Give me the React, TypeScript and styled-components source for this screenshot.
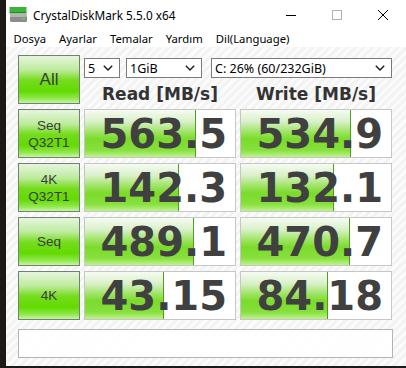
import React from 'react'
import styled, { createGlobalStyle } from 'styled-components'

const GlobalStyle = createGlobalStyle`
  html, body {
    margin: 0;
    padding: 0;
    background: #1d1916;
    overflow: hidden;
  }
  #root {
    width: 406px;
    height: 368px;
  }
`

const Window = styled.div`
  margin-left: 6px;
  width: 400px;
  height: 366px;
  background: #ffffff;
  display: flex;
  flex-direction: column;
  font-family: 'Noto Sans', 'Open Sans', sans-serif;
  color: #000;
`

const TitleBar = styled.div`
  height: 29px;
  display: flex;
  align-items: center;
  padding-left: 3px;
`

const TitleText = styled.span`
  font-size: 11.8px;
  margin-left: 5px;
  flex: 1;
  color: #000;
`

const WinButton = styled.div`
  width: 46px;
  height: 29px;
  display: flex;
  align-items: center;
  justify-content: center;
`

const MenuBar = styled.div`
  height: 18px;
  display: flex;
  align-items: center;
  padding-left: 1px;
`

const MenuItem = styled.span`
  font-size: 11.3px;
  padding: 0 6.5px;
  color: #000;
`

const Content = styled.div`
  flex: 1;
  background: repeating-linear-gradient(
    135deg,
    #f3f3f3 0px,
    #f3f3f3 3px,
    #fbfbfb 3px,
    #fbfbfb 6px
  );
  padding: 8px 13px 0 12px;
  display: flex;
  flex-direction: column;
`

const Grid = styled.div`
  display: grid;
  grid-template-columns: 62px 152px 152px;
  grid-auto-rows: 49px;
  column-gap: 4px;
  row-gap: 5px;
`

const LabelButton = styled.div<{ $big?: boolean }>`
  box-sizing: border-box;
  border: 1px solid #728272;
  background: linear-gradient(
    to bottom,
    #e6f5de 0%,
    #bdeb9c 30%,
    #74dc1c 52%,
    #62da00 75%,
    #8fe84a 90%,
    #c6f5a0 100%
  );
  display: flex;
  flex-direction: column;
  align-items: center;
  justify-content: center;
`

const LabelText = styled.span<{ $big?: boolean }>`
  font-family: 'Liberation Sans', Arial, sans-serif;
  font-size: ${p => (p.$big ? '17px' : '13.5px')};
  line-height: ${p => (p.$big ? '18px' : '17px')};
  color: #3c3c3c;
`

const TopControls = styled.div`
  grid-column: 2 / 4;
  display: flex;
  flex-direction: column;
`

const SelectRow = styled.div`
  display: flex;
  margin-top: 3px;
  height: 20px;
`

const Select = styled.div<{ $w: number; $ml: number }>`
  box-sizing: border-box;
  width: ${p => p.$w}px;
  margin-left: ${p => p.$ml}px;
  height: 20px;
  border: 1px solid #7a7a7a;
  background: #fff;
  display: flex;
  align-items: center;
  justify-content: space-between;
  padding: 0 6px 0 3px;
  font-size: 12.5px;
  color: #000;
`

const HeaderRow = styled.div`
  display: grid;
  grid-template-columns: 152px 152px;
  column-gap: 4px;
  flex: 1;
  align-items: center;
`

const Header = styled.div`
  text-align: center;
  font-family: 'DejaVu Sans', Verdana, sans-serif;
  font-weight: bold;
  font-size: 17px;
  color: #333;
  padding-top: 5px;
`

const ValueBox = styled.div`
  position: relative;
  box-sizing: border-box;
  border: 1px solid #c6c6c6;
  background: #fff;
  overflow: hidden;
`

const Fill = styled.div`
  position: absolute;
  left: 0;
  top: 0;
  bottom: 0;
  border-right: 1px solid #4f9f1f;
  background: linear-gradient(
    to bottom,
    #f6fbf3 0%,
    #d8f0c8 25%,
    #9be35e 48%,
    #7bdb2a 62%,
    #86e03c 85%,
    #bff28e 100%
  );
`

const ValueText = styled.div`
  position: relative;
  height: 100%;
  display: flex;
  align-items: center;
  justify-content: flex-end;
  padding-right: 8px;
  font-family: 'DejaVu Sans', Verdana, sans-serif;
  font-weight: bold;
  font-size: 40px;
  color: #404040;
`

const Comment = styled.div`
  margin-top: 9px;
  height: 29px;
  box-sizing: border-box;
  border: 1px solid #b4b4b4;
  background: rgba(255, 255, 255, 0.85);
`

const Chevron = () => (
  <svg width="10" height="6" viewBox="0 0 10 6">
    <path d="M0.8 0.8 L5 5 L9.2 0.8" fill="none" stroke="#1a1a1a" strokeWidth="1.4" />
  </svg>
)

const AppIcon = () => (
  <svg width="19" height="17" viewBox="0 0 19 17">
    <rect x="0.5" y="1" width="17" height="5" fill="#3cb43c" />
    <rect x="0.5" y="6" width="17" height="1.5" fill="#2a8a2a" />
    <rect x="1" y="8" width="17" height="8" rx="1.5" fill="#8c8c8c" />
    <rect x="1" y="8" width="17" height="3" rx="1" fill="#b4b4b4" />
    <rect x="12" y="12" width="4" height="1.5" fill="#5ad25a" />
  </svg>
)

type Row = { label: string[]; read: number; write: number; r: string; w: string }

const rows: Row[] = [
  { label: ['Seq', 'Q32T1'], read: 563.5, write: 534.9, r: '563.5', w: '534.9' },
  { label: ['4K', 'Q32T1'], read: 142.3, write: 132.1, r: '142.3', w: '132.1' },
  { label: ['Seq'], read: 489.1, write: 470.7, r: '489.1', w: '470.7' },
  { label: ['4K'], read: 43.15, write: 84.18, r: '43.15', w: '84.18' },
]

const meter = (v: number) => Math.min(100, 20.6 + 19.2 * Math.log10(v))

const Cell: React.FC<{ value: number; text: string }> = ({ value, text }) => (
  <ValueBox>
    <Fill style={{ width: `${meter(value)}%` }} />
    <ValueText>{text}</ValueText>
  </ValueBox>
)

const App: React.FC = () => {
  return (
    <>
      <GlobalStyle />
      <Window>
        <TitleBar>
          <AppIcon />
          <TitleText>CrystalDiskMark 5.5.0 x64</TitleText>
          <WinButton>
            <svg width="10" height="10" viewBox="0 0 10 10">
              <path d="M0 5.5 H10" stroke="#000" strokeWidth="1" />
            </svg>
          </WinButton>
          <WinButton>
            <svg width="10" height="10" viewBox="0 0 10 10">
              <rect x="0.5" y="0.5" width="9" height="9" fill="none" stroke="#b0b0b0" strokeWidth="1" />
            </svg>
          </WinButton>
          <WinButton>
            <svg width="10" height="10" viewBox="0 0 10 10">
              <path d="M0 0 L10 10 M10 0 L0 10" stroke="#000" strokeWidth="1" />
            </svg>
          </WinButton>
        </TitleBar>
        <MenuBar>
          <MenuItem>Dosya</MenuItem>
          <MenuItem>Ayarlar</MenuItem>
          <MenuItem>Temalar</MenuItem>
          <MenuItem>Yardım</MenuItem>
          <MenuItem>Dil(Language)</MenuItem>
        </MenuBar>
        <Content>
          <Grid>
            <LabelButton>
              <LabelText $big>All</LabelText>
            </LabelButton>
            <TopControls>
              <SelectRow>
                <Select $w={36} $ml={0}>
                  <span>5</span>
                  <Chevron />
                </Select>
                <Select $w={76} $ml={6}>
                  <span>1GiB</span>
                  <Chevron />
                </Select>
                <Select $w={181} $ml={9}>
                  <span>C: 26% (60/232GiB)</span>
                  <Chevron />
                </Select>
              </SelectRow>
              <HeaderRow>
                <Header>Read [MB/s]</Header>
                <Header>Write [MB/s]</Header>
              </HeaderRow>
            </TopControls>
            {rows.map((row, i) => (
              <React.Fragment key={i}>
                <LabelButton>
                  {row.label.map(l => (
                    <LabelText key={l}>{l}</LabelText>
                  ))}
                </LabelButton>
                <Cell value={row.read} text={row.r} />
                <Cell value={row.write} text={row.w} />
              </React.Fragment>
            ))}
          </Grid>
          <Comment />
        </Content>
      </Window>
    </>
  )
}

export default App
